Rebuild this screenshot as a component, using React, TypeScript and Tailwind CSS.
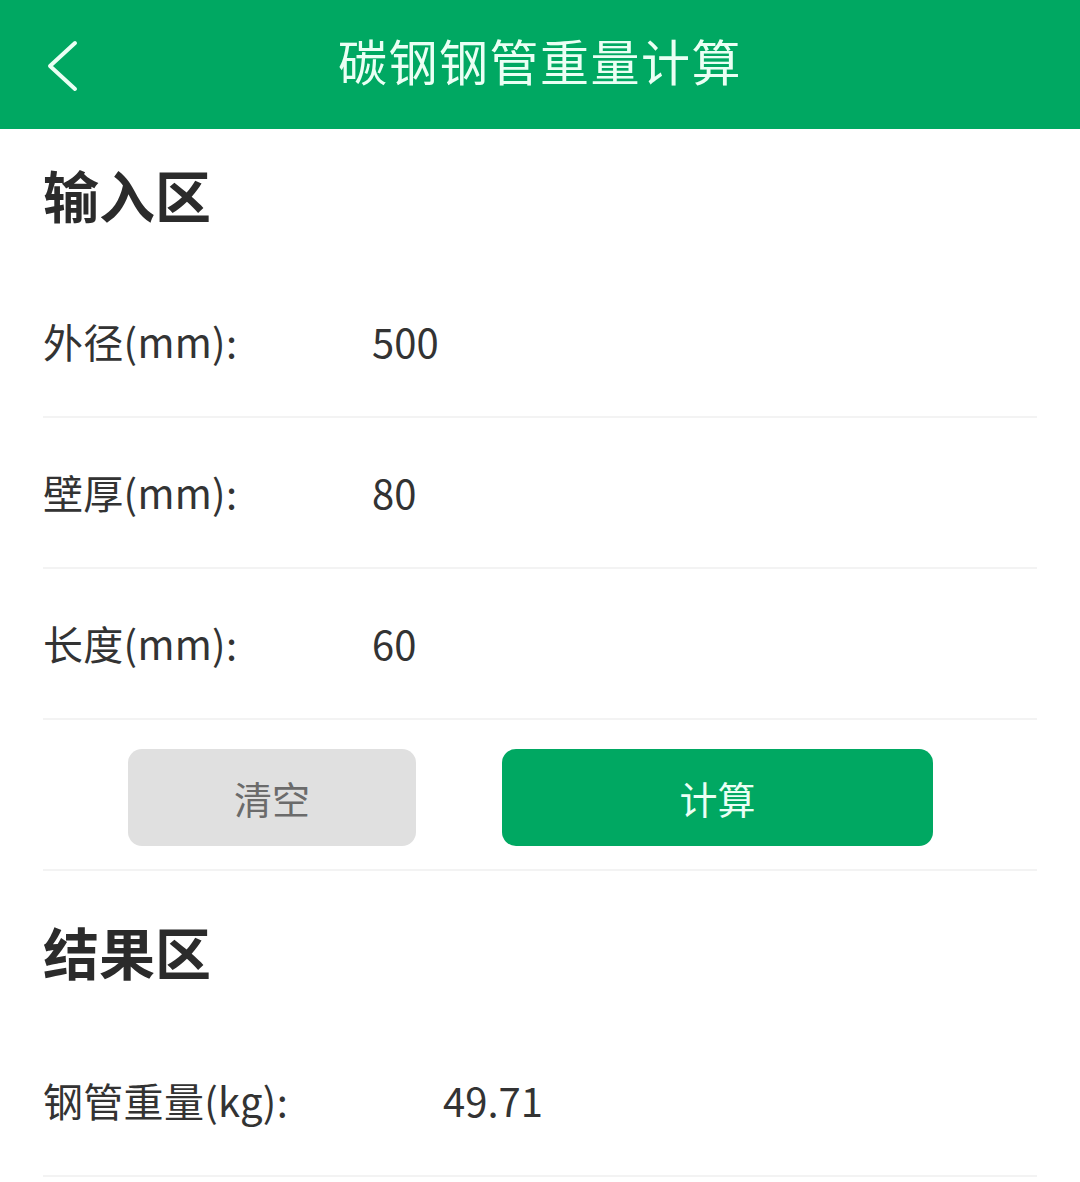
const FONT = "font-['Noto_Sans_CJK_SC','Noto_Sans',sans-serif]";

const inputs = [
  { label: '外径(mm):', value: '500' },
  { label: '壁厚(mm):', value: '80' },
  { label: '长度(mm):', value: '60' },
];

function Row({ label, value, labelWidth }: { label: string; value: string; labelWidth: string }) {
  return (
    <div className="flex h-[151px] items-center border-b-2 border-[#f3f3f3] pb-[2px]">
      <span className={`${labelWidth} shrink-0 text-[40px] tracking-[0.3px] text-[#333]`}>{label}</span>
      <span className="text-[40px] text-[#333]">{value}</span>
    </div>
  );
}

export default function App() {
  return (
    <div className={`${FONT} min-h-[1182px] w-[1080px] bg-white`}>
      <header className="relative flex h-[129px] items-center justify-center bg-[#00a862] pb-[10px]">
        <svg
          className="absolute left-[44px] top-[40px]"
          width="36"
          height="52"
          viewBox="0 0 36 52"
          fill="none"
          stroke="#eafff4"
          strokeWidth="4"
          strokeLinecap="round"
          strokeLinejoin="round"
        >
          <path d="M31 3 L6 26 L31 49" />
        </svg>
        <h1 className="text-[49px] leading-none tracking-[1.5px] text-[#eafff4]">碳钢钢管重量计算</h1>
      </header>

      <main className="px-[43px]">
        <div className="flex h-[138px] items-center pb-[8px]">
          <h2 className="text-[56px] font-bold leading-none text-[#2b2b2b]">输入区</h2>
        </div>
        {inputs.map((r) => (
          <Row key={r.label} label={r.label} value={r.value} labelWidth="w-[329px]" />
        ))}

        <div className="flex h-[151px] items-center border-b-2 border-[#f3f3f3] pl-[85px] pt-[6px]">
          <button className="flex h-[97px] w-[288px] items-center justify-center rounded-[14px] bg-[#e0e0e0] text-[38px] text-[#6b6b6b]">
            清空
          </button>
          <button className="ml-[86px] flex h-[97px] w-[431px] items-center justify-center rounded-[14px] bg-[#00a862] text-[38px] text-[#eafff4]">
            计算
          </button>
        </div>

        <div className="flex h-[155px] items-center pt-[4px]">
          <h2 className="text-[56px] font-bold leading-none text-[#2b2b2b]">结果区</h2>
        </div>
        <Row label="钢管重量(kg):" value="49.71" labelWidth="w-[400px]" />
      </main>
    </div>
  );
}
